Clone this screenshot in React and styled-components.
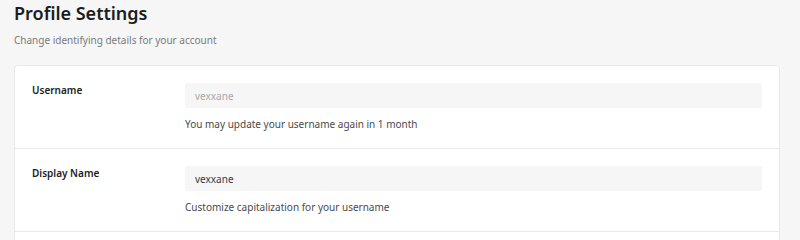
import React from 'react';
import styled, { createGlobalStyle } from 'styled-components';

const GlobalStyle = createGlobalStyle`
    html, body {
        margin: 0;
        padding: 0;
        background: #f6f6f7;
        font-family: "Noto Sans", "Liberation Sans", Arial, sans-serif;
    }
`;

const fields = [
    { label: 'Username', value: 'vexxane', disabled: true, hint: 'You may update your username again in 1 month' },
    { label: 'Display Name', value: 'vexxane', disabled: false, hint: 'Customize capitalization for your username' },
];

function App() {
    return (
        <Page>
            <GlobalStyle />
            <Title>Profile Settings</Title>
            <Subtitle>Change identifying details for your account</Subtitle>
            <SettingsCard>
                {fields.map((field) => (
                    <FieldRow key={field.label}>
                        <FieldLabel>{field.label}</FieldLabel>
                        <FieldBody>
                            <TextInput disabled={field.disabled} defaultValue={field.value} />
                            <Hint>{field.hint}</Hint>
                        </FieldBody>
                    </FieldRow>
                ))}
            </SettingsCard>
        </Page>
    );
}

const Page = styled.div`
    width: 800px;
    height: 240px;
    box-sizing: border-box;
    padding: 2px 20px 0 14px;
    overflow: hidden;
`;

const Title = styled.h1`
    margin: 0;
    font-size: 18px;
    line-height: 22px;
    font-weight: 600;
    color: #1c1c1c;
`;

const Subtitle = styled.div`
    margin-top: 8px;
    font-size: 10px;
    line-height: 16px;
    color: #7a7a7a;
`;

const SettingsCard = styled.div`
    margin-top: 17px;
    min-height: 220px;
    background: #ffffff;
    border: 1px solid #e9e9ea;
    border-radius: 4px;
`;

const FieldRow = styled.div`
    display: flex;
    padding: 17px 17px 16px 17px;
    border-bottom: 1px solid #e9e9ea;
`;

const FieldLabel = styled.div`
    width: 153px;
    flex-shrink: 0;
    font-size: 10px;
    line-height: 14px;
    font-weight: 600;
    color: #1c1c1c;
`;

const FieldBody = styled.div`
    flex: 1;
    display: flex;
    flex-direction: column;
`;

const TextInput = styled.input`
    box-sizing: border-box;
    width: 100%;
    height: 25px;
    padding: 0 10px;
    border: none;
    border-radius: 2px;
    background: #f6f6f7;
    font-family: inherit;
    font-size: 10px;
    color: ${(p) => (p.disabled ? '#a8a8a8' : '#3a3a3a')};
    outline: none;
`;

const Hint = styled.div`
    margin-top: 8px;
    font-size: 10px;
    line-height: 16px;
    color: #4a4a4a;
`;

export default App;
